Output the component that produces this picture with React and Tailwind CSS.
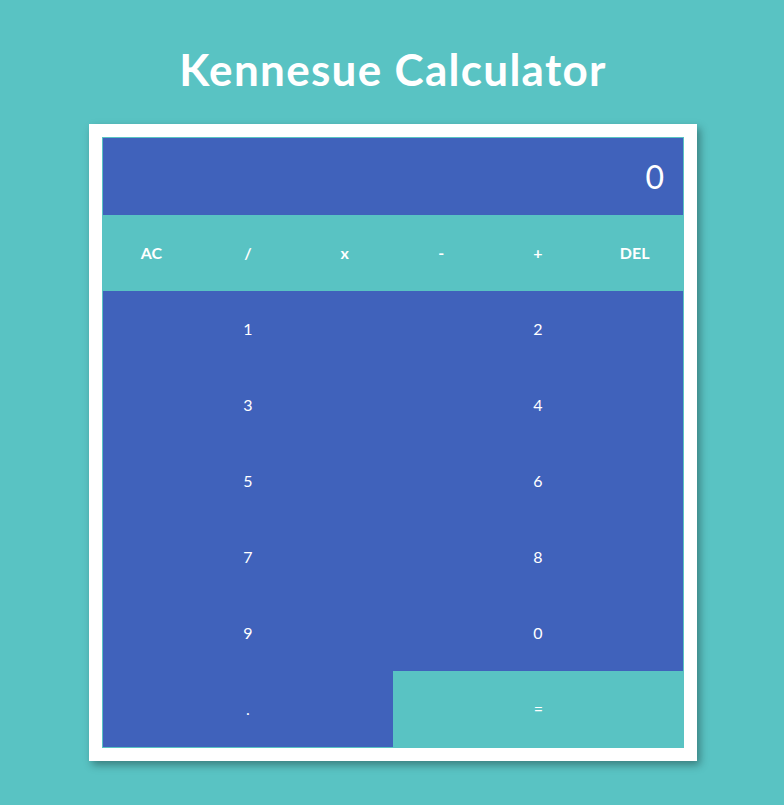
export default function App() {
  const ops = ["AC", "/", "x", "-", "+", "DEL"];
  const nums = ["1", "2", "3", "4", "5", "6", "7", "8", "9", "0"];
  return (
    <div className="min-h-screen w-full bg-[#59c3c3] flex flex-col items-center" style={{ fontFamily: "Lato, 'Open Sans', sans-serif" }}>
      <h1 className="mt-[40px] h-[58px] text-[44px] leading-[58px] font-bold text-white tracking-[1.3px] ml-[2px]">Kennesue Calculator</h1>
      <div className="mt-[26px] ml-[2px] w-[608px] bg-white p-[13px] shadow-[3px_4px_8px_rgba(0,0,0,0.35)]">
        <div className="border border-[#59c3c3] bg-[#4062bb]">
          <div className="h-[77px] flex items-center justify-end pr-[19px] text-white text-[32px]">0</div>
          <div className="grid grid-cols-6 bg-[#59c3c3] h-[76px]">
            {ops.map((o) => (
              <div key={o} className="flex items-center justify-center text-white font-bold text-[16px]">{o}</div>
            ))}
          </div>
          <div className="grid grid-cols-2">
            {nums.map((n) => (
              <div key={n} className="h-[76px] flex items-center justify-center text-white text-[16px]">{n}</div>
            ))}
            <div className="h-[76px] flex items-center justify-center text-white text-[16px]">.</div>
            <div className="h-[76px] flex items-center justify-center text-white text-[16px] bg-[#59c3c3] -mr-px -mb-px">=</div>
          </div>
        </div>
      </div>
    </div>
  );
}
